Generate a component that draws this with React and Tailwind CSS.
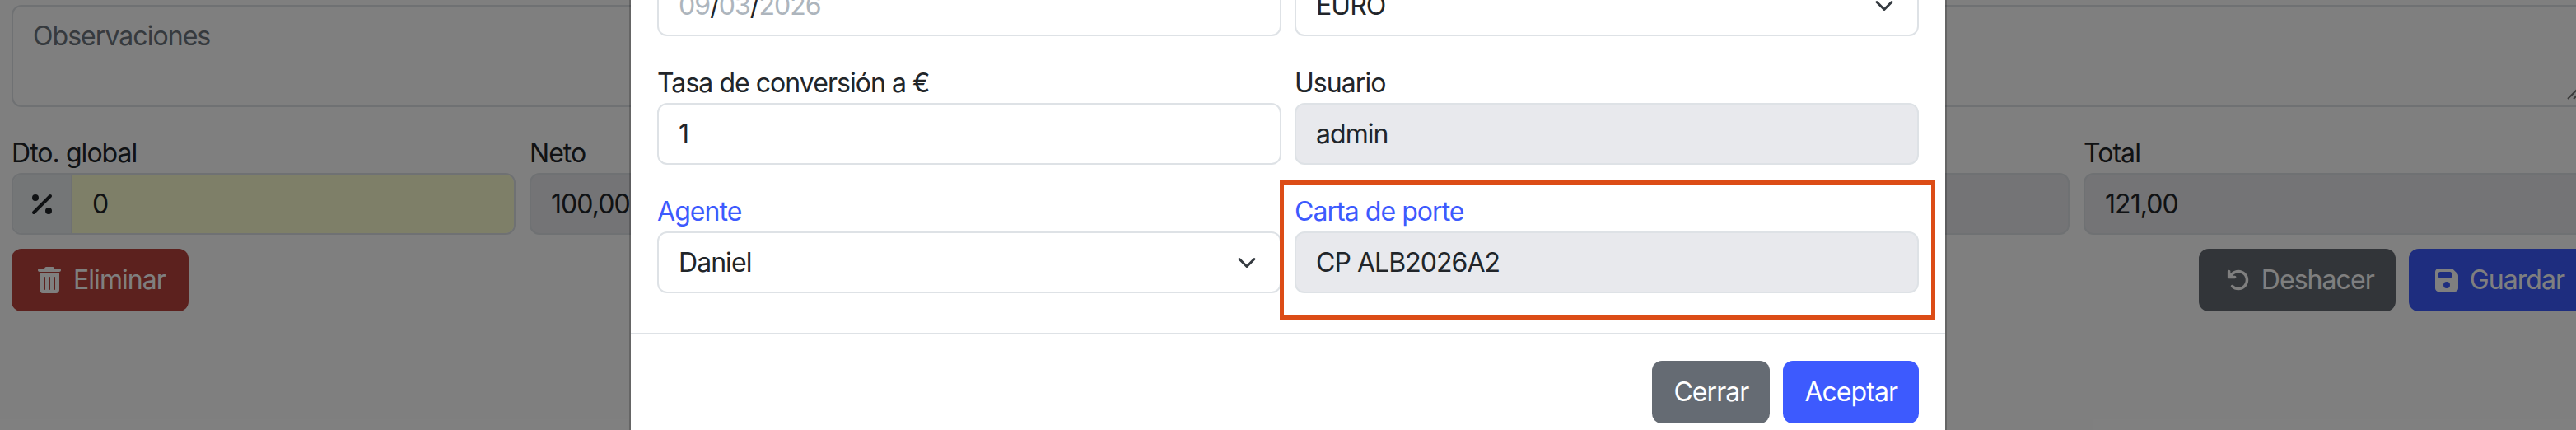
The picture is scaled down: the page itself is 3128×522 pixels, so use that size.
import { FaArrowRotateLeft, FaFloppyDisk, FaPercent, FaTrashCan } from "react-icons/fa6";

const control = "h-[75px] w-full rounded-xl border-2 border-[#dee2e6] px-[24px] text-[32px] leading-[48px] text-[#212529] outline-none";

// ---- Bootstrap-like select chevron ----
function Chevron() {
  return (
    <svg viewBox="0 0 16 16" className="h-[24px] w-[32px] shrink-0" fill="none" stroke="#343a40" strokeWidth="2" strokeLinecap="round" strokeLinejoin="round">
      <path d="M2 5l6 6 6-6" />
    </svg>
  );
}

function Field({ label, children, accent }) {
  return (
    <div>
      <label className={`block h-[48px] text-[32px] leading-[48px] ${accent ? "text-[#3d5afe]" : "text-[#212529]"}`}>
        {label}
      </label>
      {children}
    </div>
  );
}

function ReadOnly({ value }) {
  return <input readOnly value={value} className={`${control} bg-[#e8e9ed]`} />;
}

function SelectBox({ value }) {
  return (
    <div className={`${control} flex items-center justify-between bg-white`}>
      <span>{value}</span>
      <Chevron />
    </div>
  );
}

function PageBehind() {
  return (
    <div className="ml-[14px] w-[3128px] pt-[6px]">
      <div className="relative">
        <textarea
          readOnly
          placeholder="Observaciones"
          className="block h-[124px] w-full resize-none rounded-xl border-2 border-[#dee2e6] bg-white px-[24px] py-[12px] text-[32px] leading-[48px] outline-none placeholder:text-[#6c757d]"
        />
        <svg viewBox="0 0 20 20" className="absolute bottom-[9px] right-[6px] h-[20px] w-[20px]" stroke="#777" strokeWidth="2">
          <path d="M2 19L19 2M9 19L19 9" />
        </svg>
      </div>

      <div className="mt-[32px] grid grid-cols-5 gap-[17px]">
        <Field label="Dto. global">
          <div className="flex h-[75px] overflow-hidden rounded-xl border-2 border-[#dee2e6]">
            <span className="flex w-[72px] shrink-0 items-center justify-center border-r-2 border-[#dee2e6] bg-[#e9ecef] text-[32px] text-[#212529]">
              <FaPercent />
            </span>
            <input readOnly value="0" className="w-full bg-[#fdfed1] px-[24px] text-[32px] text-[#212529] outline-none" />
          </div>
        </Field>
        <Field label="Neto"><ReadOnly value="100,00" /></Field>
        <Field label={"\u00a0"}><ReadOnly value="" /></Field>
        <Field label={"\u00a0"}><ReadOnly value="" /></Field>
        <Field label="Total"><ReadOnly value="121,00" /></Field>
      </div>

      <div className="mt-[17px] flex justify-between text-[32px] leading-[48px] text-white">
        <button className="flex h-[76px] items-center rounded-xl bg-[#b8423c] pl-[26px] pr-[28px]">
          <span className="mr-[9px] flex w-[40px] justify-center"><FaTrashCan /></span>
          Eliminar
        </button>
        <div className="mr-[2px] flex gap-[16px]">
          <button className="flex h-[76px] items-center rounded-xl bg-[#656b73] pl-[28px] pr-[26px]">
            <span className="mr-[8px] flex w-[40px] justify-center"><FaArrowRotateLeft size={28} /></span>
            Deshacer
          </button>
          <button className="flex h-[76px] items-center rounded-xl bg-[#3d5afe] px-[26px]">
            <span className="mr-[8px] flex w-[40px] justify-center"><FaFloppyDisk /></span>
            Guardar
          </button>
        </div>
      </div>
    </div>
  );
}

function Modal() {
  return (
    <div className="absolute left-[764px] top-[-65px] w-[1600px] border-2 border-black/20 bg-white bg-clip-padding">
      <div className="grid grid-cols-2 gap-x-[16px] gap-y-[33px] px-[32px] pb-[48px] pt-[32px]">
        <div className={`${control} flex items-center bg-white`}>
          <span className="text-[#adb5bd]">09</span>/<span className="text-[#adb5bd]">03</span>/<span className="text-[#adb5bd]">2026</span>
        </div>
        <SelectBox value="EURO" />
        <Field label="Tasa de conversión a €">
          <input readOnly value="1" className={`${control} bg-white`} />
        </Field>
        <Field label="Usuario"><ReadOnly value="admin" /></Field>
        <Field label="Agente" accent><SelectBox value="Daniel" /></Field>
        <div className="relative">
          <Field label="Carta de porte" accent><ReadOnly value="CP ALB2026A2" /></Field>
          {/* red annotation frame from the screenshot */}
          <div className="absolute -bottom-[32px] -left-[18px] -right-[20px] -top-[14px] border-[5px] border-[#dc4c16]" />
        </div>
      </div>
      <div className="flex justify-end gap-[16px] border-t-2 border-[#dee2e6] px-[32px] pb-[24px] pt-[32px] text-[32px] leading-[48px] text-white">
        <button className="h-[76px] rounded-xl bg-[#656b73] px-[26px]">Cerrar</button>
        <button className="h-[76px] rounded-xl bg-[#3d5afe] px-[26px]">Aceptar</button>
      </div>
    </div>
  );
}

export default function App() {
  return (
    <div className="relative h-[522px] w-[3128px] overflow-hidden bg-white font-['Inter',sans-serif] tracking-[-0.95px]">
      <PageBehind />
      <div className="absolute inset-0 bg-black/50" />
      <Modal />
    </div>
  );
}
